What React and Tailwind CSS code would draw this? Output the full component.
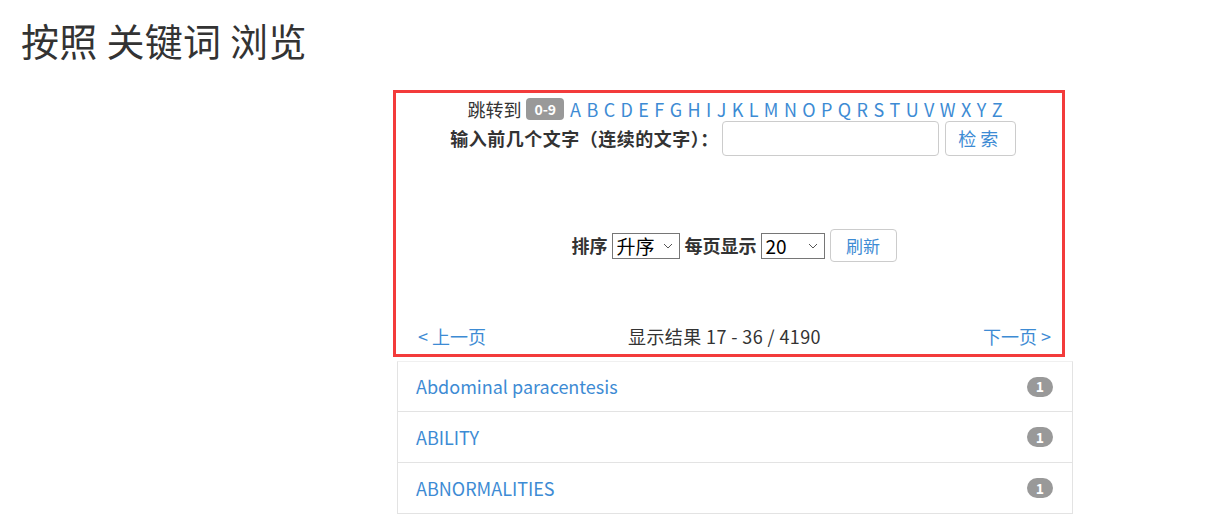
import React from "react";

const letters = "ABCDEFGHIJKLMNOPQRSTUVWXYZ".split("");

function Chevron() {
  return (
    <svg width="10" height="6" viewBox="0 0 10 6" className="shrink-0">
      <path d="M1 1l4 4 4-4" fill="none" stroke="#555" strokeWidth="1" />
    </svg>
  );
}

function FakeSelect({ value, width }) {
  return (
    <div
      className="flex h-[26px] items-center justify-between border border-[#767676] bg-white pl-[4px] pr-[6px] text-[19px] text-black"
      style={{ width }}
    >
      <span className="leading-none">{value}</span>
      <Chevron />
    </div>
  );
}

const rows = ["Abdominal paracentesis", "ABILITY", "ABNORMALITIES"];

export default function App() {
  return (
    <div
      className="min-h-[514px] bg-white text-[#333]"
      style={{ fontFamily: '"Noto Sans CJK SC", "Noto Sans", sans-serif' }}
    >
      <h1 className="pl-[21px] pt-[16px] text-[38px] font-normal leading-[48px] tracking-[0.3px] text-[#333]">
        按照 关键词 浏览
      </h1>
      <div className="pl-[393px] pt-[26px]">
        <div className="w-[672px] border-[3px] border-[#f33b3b] pb-[6px] pt-[5px]">
          <div className="flex h-[22px] items-center justify-center pl-[12px] text-[18px] leading-none">
            <span className="mr-[5px] text-[#333]">跳转到</span>
            <span className="mr-[6px] flex h-[22px] items-center rounded-[4px] bg-[#999] px-[8px] text-[14px] font-bold text-white">
              0-9
            </span>
            <span className="flex gap-[5.4px] text-[18px] text-[#3d8bd4]">
              {letters.map((l) => (
                <span key={l}>{l}</span>
              ))}
            </span>
          </div>
          <div className="mt-[1px] flex h-[35px] items-center justify-center pl-[8px]">
            <span className="text-[18px] font-bold tracking-[0.5px] text-[#333]">输入前几个文字（连续的文字）：</span>
            <div className="ml-[3px] h-[35px] w-[217px] rounded-[4px] border border-[#ccc] bg-white" />
            <button className="ml-[6px] h-[35px] w-[71px] rounded-[4px] border border-[#ccc] bg-white text-[18px] tracking-[4px] text-[#3d8bd4]">
              检索
            </button>
          </div>
          <div className="mt-[73px] flex h-[33px] items-center justify-center gap-[4px] pl-[10px]">
            <span className="text-[18px] font-bold text-[#333]">排序</span>
            <FakeSelect value="升序" width={68} />
            <span className="ml-[1px] text-[18px] font-bold text-[#333]">每页显示</span>
            <FakeSelect value="20" width={64} />
            <button className="ml-[1px] h-[33px] w-[67px] rounded-[4px] border border-[#ccc] bg-white text-[17px] text-[#3d8bd4]">
              刷新
            </button>
          </div>
          <div className="mt-[62px] flex h-[24px] items-center pl-[22px] pr-[11px] text-[18px]">
            <span className="flex-1 text-[#3d8bd4]">&lt; 上一页</span>
            <span className="mr-[20px] tracking-[0.4px] text-[#333]">显示结果 17 - 36 / 4190</span>
            <span className="flex-1 text-right text-[#3d8bd4]">下一页 &gt;</span>
          </div>
        </div>
        <div className="ml-[4px] mt-[4px] w-[676px]">
          {rows.map((r, i) => (
            <div
              key={r}
              className={`flex h-[51px] items-center justify-between border border-[#e3e3e3] pl-[18px] pr-[19px] ${i > 0 ? "border-t-0" : "border-t-[#f0f0f0]"}`}
            >
              <span className="text-[18px] text-[#3d8bd4]">{r}</span>
              <span className="flex h-[20px] w-[26px] items-center justify-center rounded-full bg-[#999] text-[14px] font-bold text-white">
                1
              </span>
            </div>
          ))}
        </div>
      </div>
    </div>
  );
}
